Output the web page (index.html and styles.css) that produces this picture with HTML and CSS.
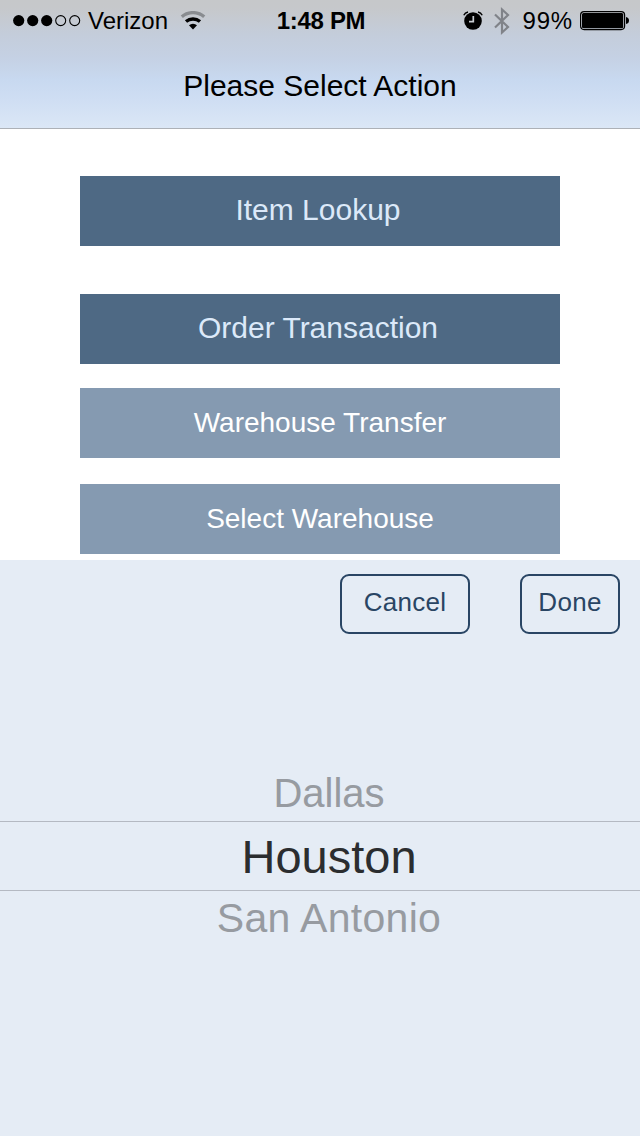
FILE: index.html
```html
<!DOCTYPE html>
<html lang="en">
<head>
    <meta charset="UTF-8">
    <meta name="viewport" content="width=device-width, initial-scale=1.0">
    <title>Please Select Action</title>
    <link rel="stylesheet" href="styles.css">
</head>
<body>
    <header class="header">
        <div class="status-bar">
            <div class="status-left">
                <svg class="signal" width="68" height="12" viewBox="0 0 68 12">
                    <circle cx="5.7" cy="5.6" r="5.6"/>
                    <circle cx="19.7" cy="5.6" r="5.6"/>
                    <circle cx="33.7" cy="5.6" r="5.6"/>
                    <circle class="empty" cx="47.7" cy="5.6" r="5"/>
                    <circle class="empty" cx="61.7" cy="5.6" r="5"/>
                </svg>
                <span class="carrier">Verizon</span>
                <svg class="wifi" width="26" height="20" viewBox="0 0 26 20">
                    <path class="weak" d="M1.8 5.7a17.5 17.5 0 0 1 22.4 0"/>
                    <path d="M6 10.5a11 11 0 0 1 14 0"/>
                    <path class="dot" d="M13 18.5l-4-4.3a6 6 0 0 1 8 0z"/>
                </svg>
            </div>
            <div class="time">1:48 PM</div>
            <div class="status-right">
                <svg class="alarm" width="20" height="20" viewBox="0 0 20 20">
                    <circle cx="10" cy="10" r="8.8"/>
                    <path class="bell" d="M.8 4.3Q2 1.5 5 1M15 1Q18 1.5 19.2 4.3"/>
                    <path class="hands" d="M10.3 5v5.7H6"/>
                </svg>
                <svg class="bluetooth" width="16" height="28" viewBox="0 0 16 28">
                    <path d="M1 7.5L14 20l-6 5.5v-23L14 8 1 20.5"/>
                </svg>
                <span class="percent">99%</span>
                <svg class="battery" width="49" height="20" viewBox="0 0 49 20">
                    <rect class="shell" x=".6" y=".6" width="44" height="18" rx="3.5"/>
                    <rect x="2" y="2" width="41.2" height="15.2" rx="1.5"/>
                    <path d="M46 6q3 .5 3 3.5t-3 3.5z"/>
                </svg>
            </div>
        </div>
        <h1 class="title">Please Select Action</h1>
    </header>

    <main class="actions">
        <button class="action item-lookup">Item Lookup</button>
        <button class="action order">Order Transaction</button>
        <button class="action light transfer">Warehouse Transfer</button>
        <button class="action light select">Select Warehouse</button>
    </main>

    <section class="picker">
        <div class="toolbar">
            <button class="cancel">Cancel</button>
            <button class="done">Done</button>
        </div>
        <ul class="cities">
            <li class="dallas">Dallas</li>
            <li class="selected">Houston</li>
            <li class="san-antonio">San Antonio</li>
        </ul>
    </section>
</body>
</html>
```
FILE: styles.css
```css
* {
    box-sizing: border-box;
}
body {
    margin: 0;
    height: 1136px;
    display: flex;
    flex-direction: column;
    overflow: hidden;
    background-color: #fff;
    font-family: "Liberation Sans", Arial, sans-serif;
}
button {
    margin: 0;
    padding: 0;
    border: none;
    border-radius: 0;
    font-family: inherit;
    cursor: pointer;
}

/* header */
.header {
    height: 129px;
    background: linear-gradient(#c6c8ca 0, #c6c8cb 8px, #c4cddb 35px, #c5d1e4 58px, #c8d9f0 80px, #cfdef3 100px, #dbe7f6 128px);
    border-bottom: 1px solid #adb1b7;
}
.status-bar {
    display: grid;
    grid-template-columns: 1fr auto 1fr;
    align-items: center;
    height: 41px;
    padding: 0 11px 0 13px;
    font-size: 24px;
    line-height: 41px;
    white-space: nowrap;
}
.status-left, .status-right {
    display: flex;
    align-items: center;
}
.status-right {
    justify-content: flex-end;
}
.signal .empty {
    fill: none;
    stroke: #000;
    stroke-width: 1.1;
}
.carrier {
    margin-left: 7px;
}
.wifi {
    margin-left: 12px;
}
.wifi path {
    fill: none;
    stroke: #000;
    stroke-width: 3.4;
}
.wifi .weak {
    stroke: #898c90;
}
.wifi .dot {
    fill: #000;
    stroke: none;
}
.time {
    font-weight: bold;
    letter-spacing: -0.3px;
}
.alarm .bell {
    fill: none;
    stroke: #000;
    stroke-width: 1.4;
}
.alarm .hands {
    fill: none;
    stroke: #c8ccd2;
    stroke-width: 1.7;
}
.bluetooth {
    margin-left: 11px;
    fill: none;
    stroke: #808389;
    stroke-width: 2.2;
}
.percent {
    margin-left: 13px;
    letter-spacing: 0.8px;
}
.battery {
    margin-left: 7px;
}
.battery .shell {
    fill: none;
    stroke: #000;
    stroke-width: 1.2;
}
.title {
    margin: 0;
    font-size: 30px;
    font-weight: normal;
    line-height: 90px;
    text-align: center;
}

/* action buttons */
.actions {
    display: flex;
    flex-direction: column;
    align-items: center;
    height: 431px;
    padding-top: 47px;
}
.action {
    flex: none;
    width: 480px;
    height: 70px;
    background-color: #4e6984;
    color: #dce9f9;
    font-size: 30px;
    line-height: 68px;
    padding: 0 4px 2px 0;
}
.order {
    margin-top: 48px;
}
.light {
    background-color: #859ab1;
    color: #fff;
    font-size: 28px;
    line-height: 70px;
    padding: 0;
}
.transfer {
    margin-top: 24px;
}
.select {
    margin-top: 26px;
}

/* city picker */
.picker {
    flex: 1;
    background-color: #e5ecf5;
}
.toolbar {
    display: flex;
    justify-content: flex-end;
    gap: 50px;
    padding: 14px 20px 0;
}
.toolbar button {
    height: 60px;
    padding-bottom: 3px;
    border: 2px solid #294564;
    border-radius: 9px;
    background: none;
    color: #294564;
    font-size: 26px;
    letter-spacing: 0.3px;
}
.toolbar .cancel {
    width: 130px;
}
.toolbar .done {
    width: 100px;
}
.cities {
    margin: 132px 0 0;
    padding: 0;
    list-style: none;
    text-align: center;
}
.cities li {
    height: 55px;
    padding-left: 18px;
    color: #979ba1;
    font-size: 40px;
    line-height: 55px;
}
.cities .selected {
    height: 70px;
    border-top: 1px solid #b4b9c2;
    border-bottom: 1px solid #b4b9c2;
    color: #2b2d2f;
    font-size: 47px;
    line-height: 69px;
}
.cities .san-antonio {
    font-size: 41px;
    letter-spacing: 0.3px;
}
```
